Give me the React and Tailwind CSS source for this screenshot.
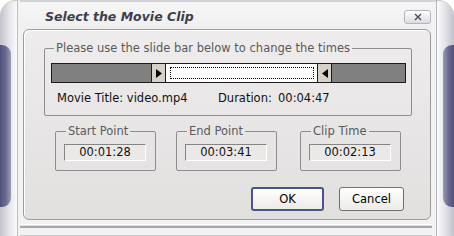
import React from "react";

function Groupbox({ label, className, legendClass, children }) {
  return (
    <fieldset className={"border border-[#8e8e8e] rounded-[2px] " + className}>
      <legend className={"px-[2px] leading-[12px] text-[#5a5a5a] " + legendClass}>{label}</legend>
      {children}
    </fieldset>
  );
}

function TimeBox({ label, value, className }) {
  return (
    <Groupbox label={label} className={"w-[101px] h-[46px] " + className} legendClass="ml-[10px]">
      <div className="mt-[7px] ml-[8px] w-[82px] h-[17px] border border-t-[#858585] border-l-[#858585] border-b-white border-r-white bg-[#ebe9e8] flex items-center justify-center text-[#101010] leading-[13px]">
        {value}
      </div>
    </Groupbox>
  );
}

export default function App() {
  return (
    <div className="w-[454px] h-[236px] bg-white flex overflow-hidden font-[family-name:'DejaVu_Sans',sans-serif] text-[11.5px] text-black">
      {/* left frame */}
      <div className="w-[20px] h-full flex">
        <div className="w-[17px] h-full rounded-tl-[16px] border-t border-[#c6c6cc] bg-gradient-to-r from-[#c2c2ca] via-[#e2e2e8] to-[#fbfbfc] flex flex-col">
          <div className="h-[44px]" />
          <div className="w-[11px] h-[162px] rounded-r-[9px] bg-gradient-to-r from-[#50507a] via-[#6a6a90] to-[#9a9ab6]" />
        </div>
        <div className="w-[1px] h-full bg-[#bdbdc2]" />
        <div className="w-[2px] h-full bg-[#f2f2f2]" />
      </div>

      {/* center */}
      <div className="w-[412px] h-full flex flex-col bg-[#f3f2f2]">
        <div className="h-[29px] border-t-2 border-[#d2d2d6] bg-gradient-to-b from-[#f6f6f7] to-[#f0efef] flex items-start">
          <div className="ml-[25px] mt-[7px] font-bold italic text-[12.5px] leading-[16px] text-[#3e3e48]">
            Select the Movie Clip
          </div>
          <div className="ml-auto mr-[1px] mt-[8px] w-[27px] h-[14px] rounded-[3px] border border-[#b4b4bc] bg-gradient-to-b from-white to-[#dcdce2] flex items-center justify-center">
            <svg width="8" height="8" viewBox="0 0 8 8">
              <path d="M1 1 L7 7 M7 1 L1 7" stroke="#4a4a52" strokeWidth="1.4" />
            </svg>
          </div>
        </div>

        <div className="ml-[3px] w-[408px] h-[191px] rounded-[6px] border border-[#9c9c9c] shadow-[inset_1px_1px_0_#ffffff] bg-gradient-to-b from-[#eeecec] to-[#e2dfdf] flex flex-col">
          <Groupbox
            label="Please use the slide bar below to change the times"
            className="mt-[12px] ml-[20px] w-[368px] h-[74px]"
            legendClass="ml-[9px]"
          >
            <div className="mt-[9px] ml-[6px] w-[355px] h-[20px] border border-[#1c1c1c] flex">
              <div className="w-[99px] h-full bg-[#808080]" />
              <div className="w-[15px] h-full bg-[#d6d2ca] border-l border-r border-[#1c1c1c] flex items-center justify-center">
                <svg width="6" height="9" viewBox="0 0 6 9"><path d="M0 0 L6 4.5 L0 9 Z" fill="#000" /></svg>
              </div>
              <div className="w-[151px] h-full bg-white p-[3px] pl-[4px]">
                <div className="w-full h-full border border-dotted border-black" />
              </div>
              <div className="w-[15px] h-full bg-[#d6d2ca] border-l border-r border-[#1c1c1c] flex items-center justify-center">
                <svg width="6" height="9" viewBox="0 0 6 9"><path d="M6 0 L0 4.5 L6 9 Z" fill="#000" /></svg>
              </div>
              <div className="flex-1 h-full bg-[#808080]" />
            </div>
            <div className="mt-[9px] ml-[12px] flex leading-[13px] text-[#111]">
              <span className="w-[161px]">Movie Title: video.mp4</span>
              <span className="w-[60px]">Duration:</span>
              <span>00:04:47</span>
            </div>
          </Groupbox>

          <div className="mt-[9px] ml-[31px] flex">
            <TimeBox label="Start Point" value="00:01:28" />
            <TimeBox label="End Point" value="00:03:41" className="ml-[20px]" />
            <TimeBox label="Clip Time" value="00:02:13" className="ml-[23px]" />
          </div>

          <div className="mt-[16px] ml-[227px] flex">
            <button className="w-[73px] h-[24px] rounded-[3px] border-2 border-[#48548c] bg-gradient-to-b from-white to-[#ecebe8] text-[11.5px] leading-[13px] text-black">
              OK
            </button>
            <button className="ml-[15px] w-[65px] h-[24px] rounded-[3px] border border-[#707070] bg-gradient-to-b from-white to-[#ecebe8] text-[11.5px] leading-[13px] text-black">
              Cancel
            </button>
          </div>
        </div>

        <div className="flex-1 flex flex-col">
          <div className="h-[4px]" />
          <div className="h-[1px] bg-white" />
          <div className="h-[1px] bg-[#e0e0e0]" />
          <div className="h-[2px] bg-[#a8a8ac]" />
          <div className="flex-1 bg-[#f2f2f3] border-b border-[#c8c8cc]" />
        </div>
      </div>

      {/* right frame */}
      <div className="w-[22px] h-full flex">
        <div className="w-[4px] h-full bg-[#f3f2f2] border-t-2 border-[#d2d2d6]" />
        <div className="w-[1px] h-full bg-[#b4b4ba]" />
        <div className="w-[17px] h-full rounded-tr-[16px] border-t border-[#c6c6cc] bg-gradient-to-r from-[#fbfbfc] via-[#e2e2e8] to-[#c2c2ca] flex flex-col">
          <div className="h-[44px]" />
          <div className="ml-auto w-[11px] h-[162px] rounded-l-[9px] bg-gradient-to-l from-[#50507a] via-[#6a6a90] to-[#9a9ab6]" />
        </div>
      </div>
    </div>
  );
}
